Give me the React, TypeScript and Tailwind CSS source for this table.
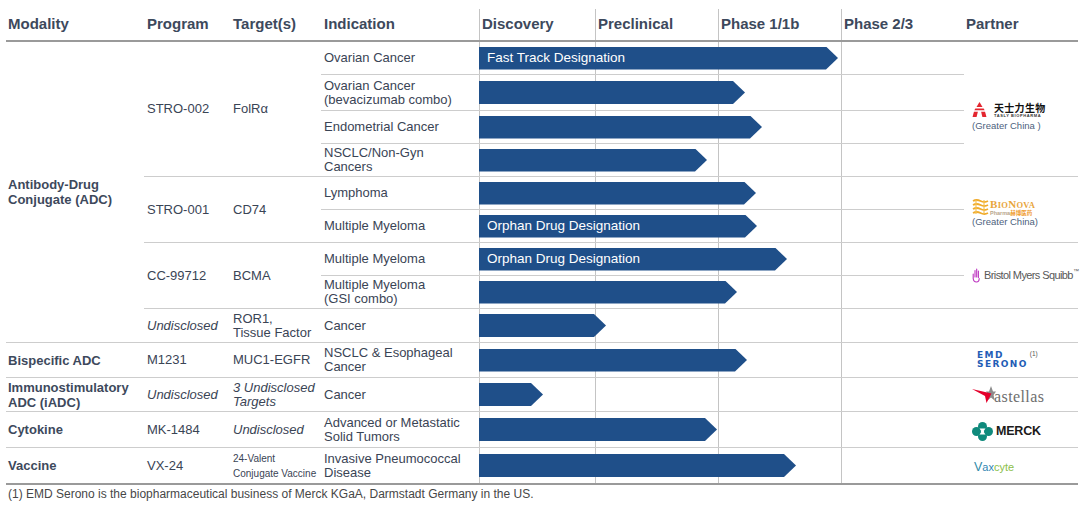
type Cell = { pos: string; lines: string[]; italic?: boolean; small?: boolean };

const modalities: Cell[] = [
  { pos: 'row-start-2 row-span-9', lines: ['Antibody-Drug', 'Conjugate (ADC)'] },
  { pos: 'row-start-11', lines: ['Bispecific ADC'] },
  { pos: 'row-start-12', lines: ['Immunostimulatory', 'ADC (iADC)'] },
  { pos: 'row-start-13', lines: ['Cytokine'] },
  { pos: 'row-start-14', lines: ['Vaccine'] },
];

const programs: Cell[] = [
  { pos: 'row-start-2 row-span-4', lines: ['STRO-002'] },
  { pos: 'row-start-6 row-span-2', lines: ['STRO-001'] },
  { pos: 'row-start-8 row-span-2', lines: ['CC-99712'] },
  { pos: 'row-start-10', lines: ['Undisclosed'], italic: true },
  { pos: 'row-start-11', lines: ['M1231'] },
  { pos: 'row-start-12', lines: ['Undisclosed'], italic: true },
  { pos: 'row-start-13', lines: ['MK-1484'] },
  { pos: 'row-start-14', lines: ['VX-24'] },
];

const targets: Cell[] = [
  { pos: 'row-start-2 row-span-4', lines: ['FolRα'] },
  { pos: 'row-start-6 row-span-2', lines: ['CD74'] },
  { pos: 'row-start-8 row-span-2', lines: ['BCMA'] },
  { pos: 'row-start-10', lines: ['ROR1,', 'Tissue Factor'] },
  { pos: 'row-start-11', lines: ['MUC1-EGFR'] },
  { pos: 'row-start-12', lines: ['3 Undisclosed', 'Targets'], italic: true },
  { pos: 'row-start-13', lines: ['Undisclosed'], italic: true },
  { pos: 'row-start-14', lines: ['24-Valent', 'Conjugate Vaccine'], small: true },
];

const rows = [
  { pos: 'row-start-2', ind: ['Ovarian Cancer'], end: 838, label: 'Fast Track Designation' },
  { pos: 'row-start-3', ind: ['Ovarian Cancer', '(bevacizumab combo)'], end: 745 },
  { pos: 'row-start-4', ind: ['Endometrial Cancer'], end: 762 },
  { pos: 'row-start-5', ind: ['NSCLC/Non-Gyn', 'Cancers'], end: 707 },
  { pos: 'row-start-6', ind: ['Lymphoma'], end: 756 },
  { pos: 'row-start-7', ind: ['Multiple Myeloma'], end: 757, label: 'Orphan Drug Designation' },
  { pos: 'row-start-8', ind: ['Multiple Myeloma'], end: 787, label: 'Orphan Drug Designation' },
  { pos: 'row-start-9', ind: ['Multiple Myeloma', '(GSI combo)'], end: 737 },
  { pos: 'row-start-10', ind: ['Cancer'], end: 606 },
  { pos: 'row-start-11', ind: ['NSCLC & Esophageal', 'Cancer'], end: 747 },
  { pos: 'row-start-12', ind: ['Cancer'], end: 543 },
  { pos: 'row-start-13', ind: ['Advanced or Metastatic', 'Solid Tumors'], end: 717 },
  { pos: 'row-start-14', ind: ['Invasive Pneumococcal', 'Disease'], end: 796 },
];

const headers = [
  { col: 'col-start-1 pl-[2px]', text: 'Modality' },
  { col: 'col-start-2 pl-[3px]', text: 'Program' },
  { col: 'col-start-3 pl-[3px]', text: 'Target(s)' },
  { col: 'col-start-4 pl-[3px]', text: 'Indication' },
  { col: 'col-start-5 pl-[3px]', text: 'Discovery' },
  { col: 'col-start-6 pl-[3px]', text: 'Preclinical' },
  { col: 'col-start-7 pl-[3px]', text: 'Phase 1/1b' },
  { col: 'col-start-8 pl-[3px]', text: 'Phase 2/3' },
  { col: 'col-start-9 pl-[2px]', text: 'Partner' },
];

// first body row sits right under the thick header rule
const top = (pos: string) => (pos.split(' ')[0] === 'row-start-2' ? '' : 'border-t border-[#cdcdcd]');

function TaslyLogo() {
  return (
    <div className="mt-[14px] flex flex-col">
      <div className="flex items-center gap-[7px]">
        <svg width="15" height="15" viewBox="0 0 13 14">
          <polygon points="6.5,0 9.3,4.6 3.7,4.6" fill="#e3262f" />
          <polygon points="2.6,6 10.4,6 11.3,7.8 1.7,7.8" fill="#e3262f" />
          <polygon points="1.3,9.2 5,9.2 3.8,14 0,14" fill="#e3262f" />
          <polygon points="8,9.2 11.7,9.2 13,14 9.2,14" fill="#e3262f" />
        </svg>
        <div className="flex flex-col leading-none">
          <span className="font-['Noto_Sans_CJK_SC',sans-serif] text-[10px] font-bold leading-[11px] tracking-[0.3px] text-[#111]">天士力生物</span>
          <span className="text-[4px] font-bold leading-[5px] tracking-[0.6px] text-[#333]">TASLY BIOPHARMA</span>
        </div>
      </div>
      <span className="mt-[2px] text-[9.5px] leading-[11px] text-[#4d5f7d]">(Greater China )</span>
    </div>
  );
}

function BioNovaLogo() {
  return (
    <div className="mt-[6px] flex flex-col">
      <div className="flex items-center gap-[1px]">
        <svg width="17" height="16" viewBox="0 0 17 16" fill="none" stroke="#f0ab2c" strokeWidth="1.8">
          <path d="M1 2 Q4.5 0 8.5 2 T16 2" />
          <path d="M1 6 Q4.5 4 8.5 6 T16 6" />
          <path d="M1 10 Q4.5 8 8.5 10 T16 10" />
          <path d="M1 14 Q4.5 12 8.5 14 T16 14" />
          <path d="M4 1 V15 M12 1 V15" stroke="#f5c35a" strokeWidth="1.2" />
        </svg>
        <div className="flex flex-col">
          <span className="font-['Liberation_Serif',serif] text-[11px] font-bold leading-[10px] tracking-[0.3px] text-[#e8a53c]">
            B<span className="text-[8.5px] uppercase">io</span>N<span className="text-[8.5px] uppercase">ova</span>
          </span>
          <span className="text-[5.5px] font-bold leading-[6px] text-[#b8a58a]">
            Pharma<span className="font-['Noto_Sans_CJK_SC',sans-serif] text-[#ef9a2a]">赫博医药</span>
          </span>
        </div>
      </div>
      <span className="text-[9.5px] leading-[11px] text-[#4d5f7d]">(Greater China)</span>
    </div>
  );
}

function BmsLogo() {
  return (
    <div className="flex items-center gap-[4px] whitespace-nowrap">
      <svg width="8" height="15" viewBox="0 0 8 15" fill="none" stroke="#bd35c0" strokeWidth="1.1" strokeLinecap="round">
        <path d="M1.2 6 V10.5 Q1.5 14 4.5 14 Q7.2 14 7.2 10.5" />
        <path d="M3 2.5 V9 M4.7 1 V9 M6.4 3 V9.5" />
      </svg>
      <span className="text-[11px] tracking-[-0.6px] text-[#585858]">
        Bristol Myers Squibb<span className="align-top text-[6px]">™</span>
      </span>
    </div>
  );
}

function EmdLogo() {
  return (
    <div className="ml-[5px] flex items-start">
      <div className="flex flex-col font-['DejaVu_Sans',sans-serif] text-[9px] font-bold leading-[9.5px] tracking-[1.4px] text-[#1f5db6]">
        <span>EMD</span>
        <span>SERONO</span>
      </div>
      <span className="-mt-[2px] ml-[2px] text-[6.5px] text-[#555]">(1)</span>
    </div>
  );
}

function AstellasLogo() {
  return (
    <div className="flex items-end">
      <svg width="24" height="18" viewBox="0 0 24 18">
        <polygon points="19,0 21,5.5 24,5.5 21.6,9 22.6,14.5 19,11.4 15.4,14.5 16.4,9 14,5.5 17,5.5" fill="#8c8c8c" />
        <polygon points="0,3 19.5,7.5 14.5,17 13,10" fill="#e4002b" />
      </svg>
      <span className="-ml-[2px] mb-[-2px] font-['Liberation_Serif',serif] text-[16px] leading-[18px] tracking-[0.4px] text-[#6e6e6e]">astellas</span>
    </div>
  );
}

function MerckLogo() {
  return (
    <div className="mt-[3px] flex items-center gap-[3px]">
      <svg width="21" height="19" viewBox="0 0 21 19">
        <circle cx="10.5" cy="4.5" r="4.5" fill="#0f8a7c" />
        <circle cx="10.5" cy="14.5" r="4.5" fill="#0f8a7c" />
        <circle cx="4.5" cy="9.5" r="4.5" fill="#0f8a7c" />
        <circle cx="16.5" cy="9.5" r="4.5" fill="#0f8a7c" />
        <polygon points="7.5,6.5 13.5,6.5 11.3,9.5 13.5,12.5 7.5,12.5 9.7,9.5" fill="#fff" />
      </svg>
      <span className="text-[12.5px] font-bold tracking-[-0.2px] text-[#1b1b1b]">MERCK</span>
    </div>
  );
}

function VaxcyteLogo() {
  return (
    <div className="ml-[2px] mt-[3px] flex items-end text-[11px] leading-none">
      <span className="text-[12.5px] text-[#2f8aa8]">V</span>
      <span className="text-[#3286b3]">ax</span>
      <span className="text-[#8cc04a]">cyte</span>
    </div>
  );
}

const partners = [
  { pos: 'row-start-2 row-span-4', logo: <TaslyLogo /> },
  { pos: 'row-start-6 row-span-2', logo: <BioNovaLogo /> },
  { pos: 'row-start-8 row-span-2', logo: <BmsLogo /> },
  { pos: 'row-start-10', logo: null },
  { pos: 'row-start-11', logo: <EmdLogo /> },
  { pos: 'row-start-12', logo: <AstellasLogo /> },
  { pos: 'row-start-13', logo: <MerckLogo /> },
  { pos: 'row-start-14', logo: <VaxcyteLogo /> },
];

function Lines({ lines, className }: { lines: string[]; className: string }) {
  return (
    <div className={className}>
      {lines.map(l => (
        <div key={l}>{l}</div>
      ))}
    </div>
  );
}

export default function App() {
  return (
    <div className="h-[506px] w-[1080px] overflow-hidden bg-white font-['Liberation_Sans',Arial,sans-serif] text-[#3a4455]">
      <div className="ml-[6px] w-[1072px] pt-[9px]">
        <div className="grid grid-cols-[138px_86px_91px_158px_116px_123px_123px_123px_114px] grid-rows-[33px_32px_36px_33px_33px_33px_33px_33px_33px_34px_35px_34px_36px_36px] border-b-2 border-[#9a9a9a]">
          {/* phase grid lines, drawn first so bars sit on top */}
          <div className="col-start-5 row-start-1 row-span-14 border-l border-[#c4c4c4]" />
          <div className="col-start-6 row-start-1 row-span-14 border-l border-[#c4c4c4]" />
          <div className="col-start-7 row-start-1 row-span-14 border-l border-[#c4c4c4]" />
          <div className="col-start-8 row-start-1 row-span-14 border-l border-[#c4c4c4]" />

          {headers.map(h => (
            <div key={h.text} className={`row-start-1 ${h.col} flex items-center border-b-2 border-[#9a9a9a] text-[15px] font-bold text-[#3d495c]`}>
              {h.text}
            </div>
          ))}

          {modalities.map(m => (
            <div key={m.pos} className={`col-start-1 ${m.pos} ${top(m.pos)} flex items-center pl-[2px]`}>
              <Lines lines={m.lines} className="text-[13px] font-bold leading-[15px] text-[#3d495c]" />
            </div>
          ))}

          {programs.map(p => (
            <div key={p.pos} className={`col-start-2 ${p.pos} ${top(p.pos)} flex items-center pl-[3px]`}>
              <Lines lines={p.lines} className={`text-[13px] leading-[14px] ${p.italic ? 'italic' : ''}`} />
            </div>
          ))}

          {targets.map(t => (
            <div key={t.pos} className={`col-start-3 ${t.pos} ${top(t.pos)} flex items-center pl-[3px]`}>
              <Lines
                lines={t.lines}
                className={t.small ? 'text-[10px] leading-[15px]' : `text-[13px] leading-[14px] ${t.italic ? 'italic' : ''}`}
              />
            </div>
          ))}

          {rows.map(r => (
            <div key={r.pos} className={`col-start-4 ${r.pos} ${top(r.pos)} flex items-center pl-[3px]`}>
              <Lines lines={r.ind} className="text-[13px] leading-[14px]" />
            </div>
          ))}

          {rows.map(r => (
            <div key={r.pos + 'bar'} className={`col-start-5 col-span-4 ${r.pos} ${top(r.pos)} flex items-center`}>
              <div
                className="flex h-[23px] items-center bg-[#1f4f89] pl-[8px] text-[13.5px] text-white [clip-path:polygon(0_0,calc(100%-12px)_0,100%_50%,calc(100%-12px)_100%,0_100%)]"
                style={{ width: r.end - 479 }}
              >
                {r.label}
              </div>
            </div>
          ))}

          {partners.map(p => (
            <div key={p.pos} className={`col-start-9 ${p.pos} ${top(p.pos)} flex items-center pl-[8px]`}>
              {p.logo}
            </div>
          ))}
        </div>
      </div>
      <p className="ml-[8px] mt-[1px] text-[12px] leading-[16px] text-[#474747]">
        (1) EMD Serono is the biopharmaceutical business of Merck KGaA, Darmstadt Germany in the US.
      </p>
    </div>
  );
}
